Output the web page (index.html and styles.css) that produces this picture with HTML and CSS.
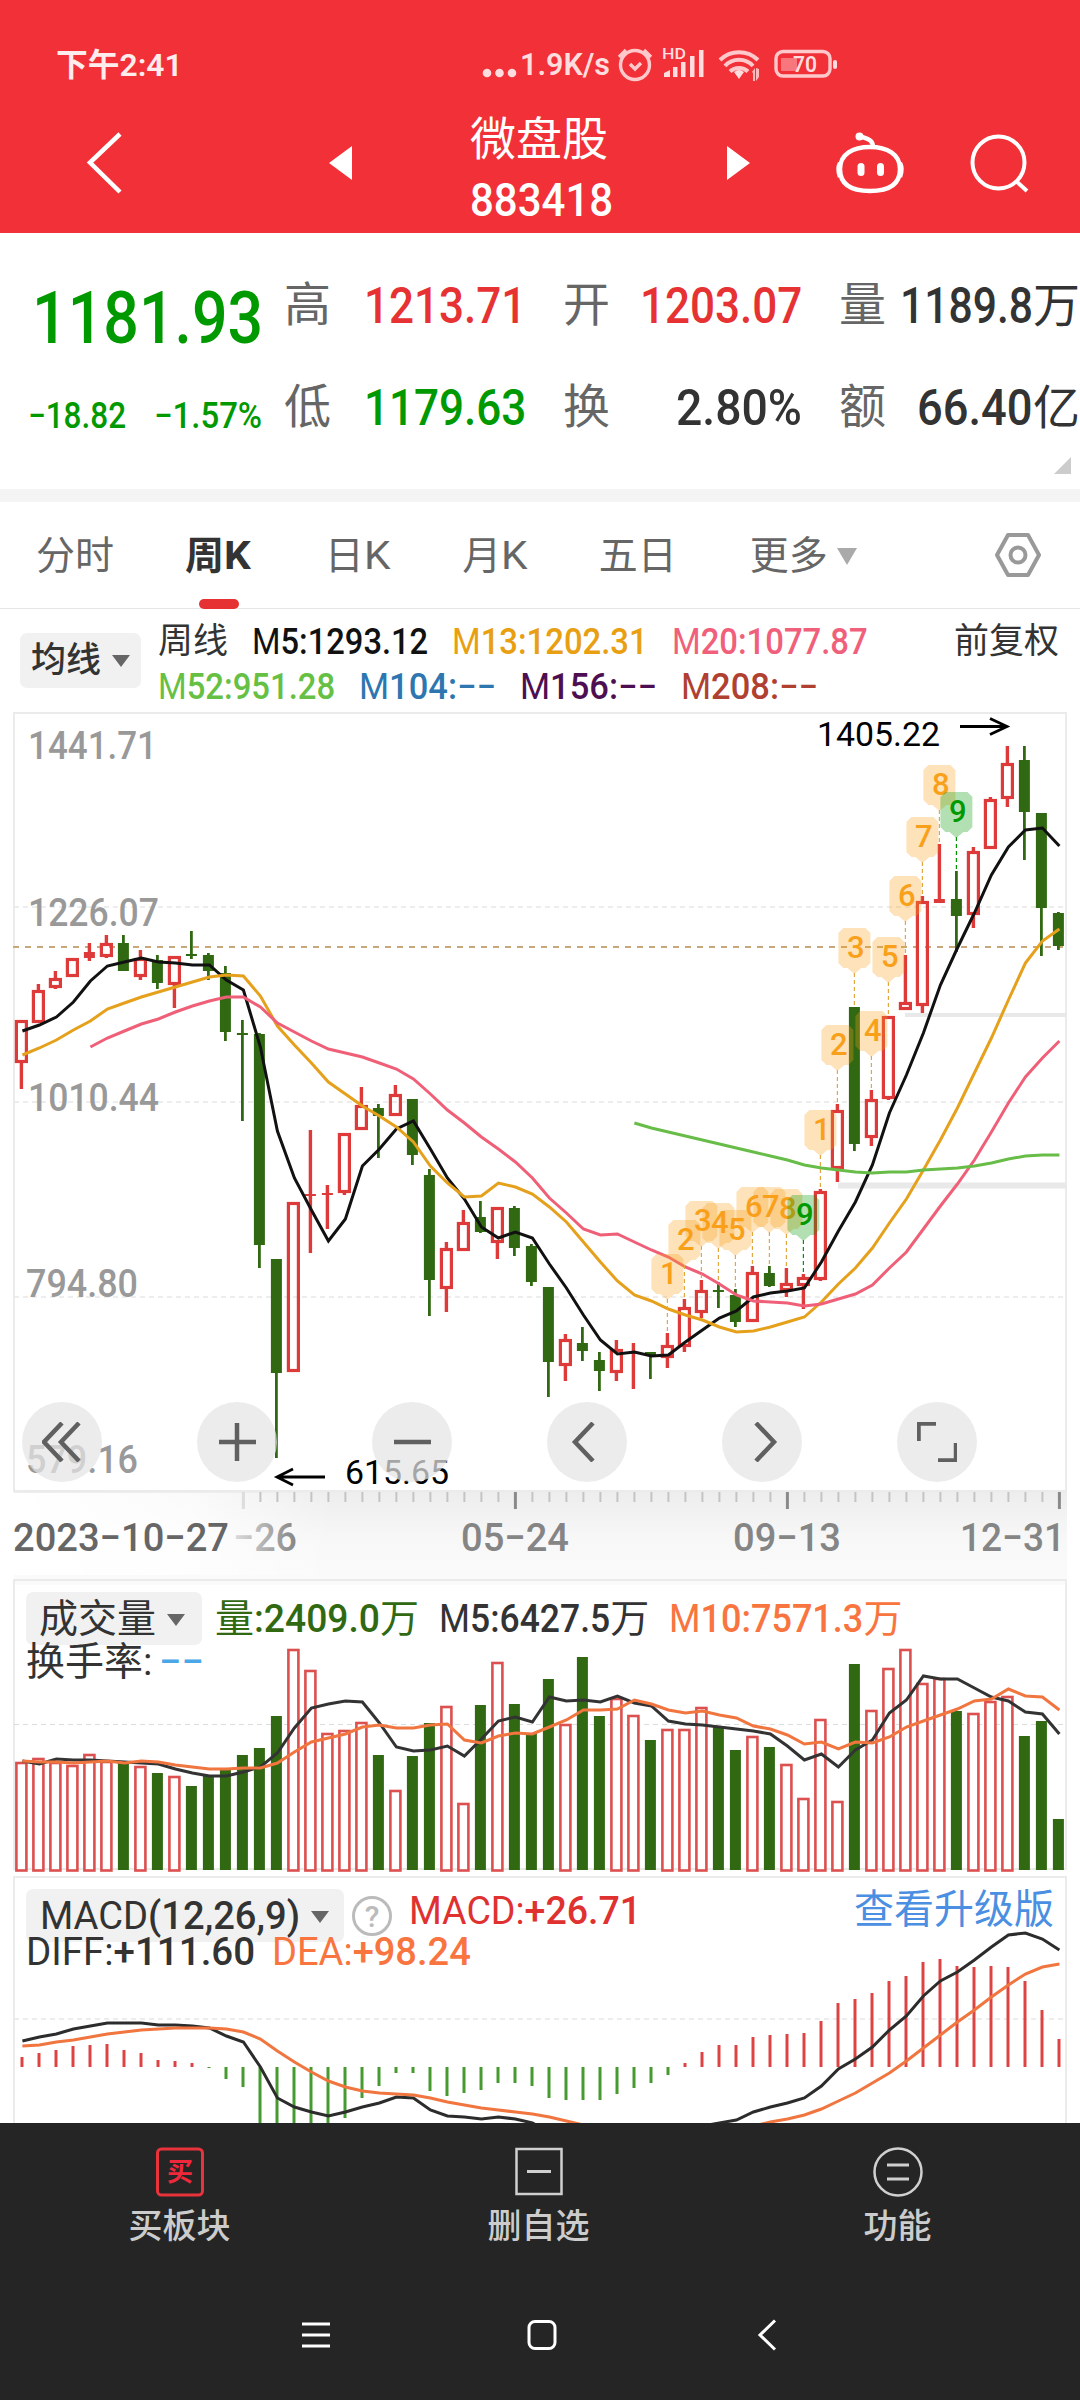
FILE: index.html
```html
<!DOCTYPE html>
<html lang="zh-CN">
	<head>
		<meta charset="utf-8">
		<title>微盘股 883418</title>
		<link rel="stylesheet" href="styles.css">
	</head>
	<body>
		<div class="top">
			<div class="statusBar">
				<span class="fit" data-w="127">下午2:41</span>
				<svg class="statusIcons" width="360" height="44" viewBox="480 43 360 44">
					<g fill="#ffdcdd">
						<circle cx="487" cy="73" r="4.3"/><circle cx="499.500" cy="73" r="4.300"/><circle cx="512" cy="73" r="4.3"/>
						<text x="520" y="75" class="netTxt" textLength="90" lengthAdjust="spacingAndGlyphs">1.9K/s</text>
						<text x="662" y="59" class="hdTxt" textLength="24" lengthAdjust="spacingAndGlyphs">HD</text>
						<path d="M664 77v-4l6-3v7zM673 77v-10h4.500v10zM681 77v-15h4.500v15zM690 77v-21h4.500v21zM699 77v-27h4.500v27z"/>
						<path d="M739 79l-5-7a8 8 0 0 1 10 0z"/>
						<path d="M752 72l3-4v13h-2v-8zM759 69v8l-3 4v-13z" opacity=".8"/>
						<rect x="781" y="58" width="16" height="13" fill="#f7777c"/>
						<rect x="833" y="60" width="4" height="9" rx="2"/>
						<text x="793" y="71.500" class="batTxt" textLength="24" lengthAdjust="spacingAndGlyphs">70</text>
					</g>
					<g fill="none" stroke="#ffc9cb" stroke-width="3.4">
						<circle cx="635" cy="65" r="14.500"/>
						<path d="M630 64l5 5 6-6M619 57l7-7M644 50l7 7"/>
						<path d="M720 60a27 27 0 0 1 38 0M725 66a19 19 0 0 1 28 0M730 71.500a13 13 0 0 1 18 0" stroke-width="4"/>
						<rect x="776" y="51.500" width="54" height="24.500" rx="7"/>
					</g>
				</svg>
			</div>
			<div class="titleBar">
				<svg class="icoBack" width="44" height="70" viewBox="82 127 44 70"><path d="M120 133L90 161.500L120 191" fill="none" stroke="#fff" stroke-width="4.500"/></svg>
				<svg class="icoPrev" width="24" height="36" viewBox="329 145 24 36"><path d="M329 163L352 146V180z" fill="#fff"/></svg>
				<div class="title">
					<div class="name">微盘股</div>
					<div class="code"><span class="fit" data-w="143">883418</span></div>
				</div>
				<svg class="icoNext" width="24" height="36" viewBox="726 145 24 36"><path d="M727 146L750 163L727 180z" fill="#fff"/></svg>
				<svg class="icoBot" width="72" height="66" viewBox="834 130 72 66">
					<g fill="none" stroke="#fff" stroke-width="4.500">
						<path d="M870 147C887 147 900 154 900 169S890 191 870 191S840 184 840 169S853 147 870 147z"/>
						<path d="M873 147C873 140 868 139 862 137"/>
						<path d="M840 163q-3 6 0 14M900 163q3 6 0 14"/>
					</g>
					<circle cx="859.500" cy="136.500" r="4" fill="#fff"/>
					<rect x="857.500" y="163" width="7" height="13" rx="3.500" fill="#fff"/>
					<rect x="877" y="163" width="7" height="13" rx="3.500" fill="#fff"/>
				</svg>
				<svg class="icoFind" width="64" height="64" viewBox="966 131 64 64"><g fill="none" stroke="#fff" stroke-width="4"><circle cx="998.500" cy="162.500" r="26"/><path d="M1016 181L1027 191"/></g></svg>
			</div>
		</div>

		<div class="quote">
			<div class="nowPrice"><span class="fit" data-w="231">1181.93</span></div>
			<div class="label">高</div><div class="val red"><span class="fit" data-w="162">1213.71</span></div>
			<div class="label">开</div><div class="val red"><span class="fit" data-w="162">1203.07</span></div>
			<div class="label">量</div><div class="val"><span class="fit" data-w="133">1189.8</span><span class="unit">万</span></div>
			<div class="diff"><span class="fit" data-w="98">−18.82</span><span class="fit" data-w="108">−1.57%</span></div>
			<div class="label">低</div><div class="val green"><span class="fit" data-w="162">1179.63</span></div>
			<div class="label">换</div><div class="val"><span class="fit" data-w="126">2.80%</span></div>
			<div class="label">额</div><div class="val"><span class="fit" data-w="116">66.40</span><span class="unit">亿</span></div>
			<svg class="corner" width="17" height="17" viewBox="0 0 17 17"><path d="M17 0V17H0z" fill="#ccc"/></svg>
		</div>

		<div class="tabs">
			<span>分时</span>
			<span class="on">周<span class="fit" data-w="27">K</span></span>
			<span>日<span class="fit" data-w="26">K</span></span>
			<span>月<span class="fit" data-w="26">K</span></span>
			<span>五日</span>
			<span>更多<i class="arr"></i></span>
			<svg class="icoSet" width="48" height="46" viewBox="0 0 48 46"><g fill="none" stroke="#999" stroke-width="4"><path d="M14 3H34L45 23L34 43H14L3 23z" stroke-linejoin="round"/><circle cx="24" cy="23" r="7.500"/></g></svg>
		</div>

		<div class="legend">
			<div class="drop maDrop">均线<i class="arr"></i></div>
			<div class="maList">
				<div class="maRow">
					<span class="cjk">周线</span>
					<span class="fit c5" data-w="176">M<b>5:1293.12</b></span>
					<span class="fit c13" data-w="196">M<b>13:1202.31</b></span>
					<span class="fit c20" data-w="196">M<b>20:1077.87</b></span>
					<span class="cjk fq">前复权</span>
				</div>
				<div class="maRow">
					<span class="fit c52" data-w="177">M<b>52:951.28</b></span>
					<span class="fit c104" data-w="137">M<b>104:−−</b></span>
					<span class="fit c156" data-w="137">M<b>156:−−</b></span>
					<span class="fit c208" data-w="137">M<b>208:−−</b></span>
				</div>
			</div>
		</div>

		<div class="kline">
			<svg id="kline" width="1080" height="866" viewBox="0 709 1080 866"></svg>
			<div class="tools">
				<div class="tool"><svg width="40" height="40" viewBox="0 0 40 40"><path d="M20 1L2 20L20 39M37 1L19 20L37 39"/></svg></div>
				<div class="tool"><svg width="40" height="40" viewBox="0 0 40 40"><path d="M20 1V39M2 20H39"/></svg></div>
				<div class="tool"><svg width="40" height="40" viewBox="0 0 40 40"><path d="M2 20H39"/></svg></div>
				<div class="tool"><svg width="40" height="40" viewBox="0 0 40 40"><path d="M26 1L8 20L26 39"/></svg></div>
				<div class="tool"><svg width="40" height="40" viewBox="0 0 40 40"><path d="M14 1L32 20L14 39"/></svg></div>
				<div class="tool"><svg width="40" height="40" viewBox="0 0 40 40"><path d="M1.500 19V1.500H19M39 21V38.500H21"/></svg></div>
			</div>
		</div>

		<div class="pane">
			<svg id="vol" width="1080" height="300" viewBox="0 1575 1080 300"></svg>
			<div class="paneHead volHead">
				<div class="drop">成交量<i class="arr"></i></div>
				<span class="cGreen"><span class="cjk">量</span><span class="fit" data-w="126"><b>:2409.0</b></span><span class="cjk">万</span></span>
				<span class="cDark"><span class="fit" data-w="171">M<b>5:6427.5</b></span><span class="cjk">万</span></span>
				<span class="cOrange"><span class="fit" data-w="194">M<b>10:7571.3</b></span><span class="cjk">万</span></span>
			</div>
			<div class="paneSub volSub"><span class="cjk">换手率:</span><span class="fit cBlue" data-w="45"><b>−−</b></span></div>
		</div>

		<div class="pane macdPane">
			<svg id="macd" width="1080" height="248" viewBox="0 1875 1080 248"></svg>
			<div class="paneHead macdHead">
				<div class="drop"><span class="fit" data-w="260">MACD<b>(12,26,9)</b></span><i class="arr"></i></div>
				<div class="help">?</div>
				<span class="fit cRed" data-w="232">MACD:<b>+26.71</b></span>
				<span class="cjk upgrade">查看升级版</span>
			</div>
			<div class="paneSub macdSub"><span class="fit cDark" data-w="229">DIFF:<b>+111.60</b></span><span class="fit cOrange" data-w="199">DEA:<b>+98.24</b></span></div>
		</div>

		<div class="footer">
			<div class="menus">
				<div class="menu"><svg width="50" height="50" viewBox="0 0 50 50"><rect x="2.500" y="2" width="45" height="46" rx="4" fill="none" stroke="#e8323c" stroke-width="3"/><text x="25" y="34" text-anchor="middle" class="buyTxt">买</text></svg>买板块</div>
				<div class="menu"><svg width="50" height="50" viewBox="0 0 50 50"><g fill="none" stroke="#d0d0d0" stroke-width="2.500"><rect x="2.500" y="2" width="45" height="45"/><path d="M13 24.500H37" stroke-width="3"/></g></svg>删自选</div>
				<div class="menu"><svg width="50" height="50" viewBox="0 0 50 50"><g fill="none" stroke="#d0d0d0" stroke-width="2.500"><circle cx="25" cy="25" r="23.500"/><path d="M14 18H36M14 32H36" stroke-width="3"/></g></svg>功能</div>
			</div>
			<div class="sysNav">
				<svg width="30" height="32" viewBox="0 0 30 32"><path d="M1 5H29M1 16H29M1 27H29"/></svg>
				<svg width="30" height="32" viewBox="0 0 30 32"><rect x="2" y="2.500" width="26" height="27" rx="6"/></svg>
				<svg width="30" height="32" viewBox="0 0 30 32"><path d="M23 1.500L8 16L23 30.500"/></svg>
			</div>
		</div>
		<script src="chart.js"></script>
	</body>
</html>
```

FILE: styles.css
```css
body {
	margin: 0px;
	width: 1080px;
	height: 2400px;
	overflow: hidden;
	background-color: #fff;
	color: #333;
	font-family: Roboto, "Noto Sans CJK SC", sans-serif;
}
svg {
	display: block;
}
b {
	font-weight: 500;
}
.fit {
	display: inline-block;
	white-space: nowrap;
	transform-origin: 0 50%;
}

/* header */
.top {
	height: 233px;
	background-color: #f13038;
	color: #fff;
}
.statusBar {
	display: flex;
	height: 86px;
	padding: 43px 0 0 56px;
	box-sizing: border-box;
	font-size: 32px;
	font-weight: 600;
	line-height: 44px;
	color: #ffecec;
}
.statusIcons {
	margin-left: 297px;
}
.netTxt {
	font-size: 31px;
	font-weight: 600;
}
.hdTxt {
	font-size: 15px;
	font-weight: 500;
}
.batTxt {
	font-size: 22px;
	font-weight: 600;
}
.titleBar {
	display: flex;
	align-items: center;
	height: 146px;
	padding: 0 50px 0 82px;
}
.titleBar svg {
	margin-top: 8px;
}
.icoPrev {
	margin-left: 203px;
}
.title {
	width: 143px;
	margin-left: 117px;
	padding-top: 20px;
}
.name {
	font-size: 46px;
	line-height: 62px;
	white-space: nowrap;
}
.code {
	font-size: 47px;
	font-weight: 500;
	line-height: 60px;
}
.icoNext {
	margin-left: 113px;
}
.icoBot {
	margin-left: 84px;
}
.icoFind {
	margin-left: 60px;
}

/* quote */
.quote {
	position: relative;
	display: grid;
	grid-template-columns: 284px 48px 231px 46px 230px 47px 194px;
	grid-template-rows: 102px 102px;
	padding-top: 21px;
	height: 235px;
	align-items: center;
	font-size: 50px;
	font-weight: 500;
	line-height: 102px;
	border-bottom: 13px solid #f4f4f4;
	white-space: nowrap;
}
.nowPrice {
	padding-left: 32px;
	font-size: 73px;
	color: #009900;
	padding-top: 25px;
}
.diff {
	display: flex;
	gap: 28px;
	padding-left: 28px;
	padding-top: 18px;
	font-size: 36px;
	font-weight: 500;
	color: #009900;
}
.label {
	font-size: 47px;
	font-weight: 400;
	color: #666;
}
.val {
	display: flex;
	justify-content: flex-end;
	padding-right: 37px;
	padding-top: 1px;
}
.val:has(.unit) {
	padding-right: 0;
}
.unit {
	font-size: 47px;
	font-weight: 400;
}
.red {
	color: #e63232;
}
.green {
	color: #009900;
}
.corner {
	position: absolute;
	right: 9px;
	bottom: 15px;
}

/* tabs */
.tabs {
	display: flex;
	align-items: center;
	height: 106px;
	padding-left: 36px;
	border-bottom: 1px solid #e6e6e6;
	font-size: 39px;
	font-weight: 400;
	color: #666;
	white-space: nowrap;
	box-sizing: content-box;
}
.tabs > span {
	position: relative;
	line-height: 106px;
	padding-top: 1px;
}
.tabs > span:nth-child(2) { margin-left: 71px; }
.tabs > span:nth-child(3) { margin-left: 74px; }
.tabs > span:nth-child(4) { margin-left: 72px; }
.tabs > span:nth-child(5) { margin-left: 71px; }
.tabs > span:nth-child(6) { margin-left: 73px; }
.on {
	color: #333;
	font-weight: 700;
}
.on::after {
	content: "";
	position: absolute;
	left: 14px;
	bottom: 0;
	width: 40px;
	height: 10px;
	border-radius: 5px;
	background-color: #e63232;
}
.arr {
	display: inline-block;
	border: 9px solid transparent;
	border-top: 12px solid #666;
	border-bottom: 0;
	vertical-align: middle;
}
.tabs .arr {
	margin: -4px 0 0 9px;
	border-width: 17px 10px 0;
	border-top-color: #aaa;
}
.icoSet {
	margin-left: 137px;
}

/* ma legend */
.legend {
	display: flex;
	height: 100px;
	padding-left: 20px;
	font-size: 36px;
}
.drop {
	background-color: #f1f1f1;
	border-radius: 7px;
	white-space: nowrap;
}
.maDrop {
	width: 121px;
	height: 55px;
	margin-top: 24px;
	padding-left: 11px;
	box-sizing: border-box;
	line-height: 55px;
	font-size: 35px;
	font-weight: 500;
}
.drop .arr {
	margin: -3px 0 0 11px;
}
.maList {
	margin-left: 17px;
	padding-top: 11px;
	width: 906px;
}
.maRow {
	display: flex;
	gap: 24px;
	height: 45px;
	line-height: 45px;
}
.maRow .cjk {
	font-size: 35px;
	line-height: 43px;
}
.fq {
	margin-left: auto;
	margin-right: 5px;
}
.c5 { color: #111; }
.c13 { color: #e8a012; }
.c20 { color: #f0607a; }
.c52 { color: #66c044; }
.c104 { color: #2e76b0; }
.c156 { color: #4d0f52; }
.c208 { color: #b04030; }

/* charts */
.kline, .pane {
	position: relative;
}
.axisTxt {
	font-size: 39.500px;
	font-weight: 500;
	fill: #999;
}
.dateTxt {
	font-size: 39.500px;
	font-weight: 500;
	fill: #858585;
}
.peakTxt {
	font-size: 33px;
	fill: #000;
}
.tagTxt {
	font-size: 31px;
	font-weight: 500;
	text-anchor: middle;
}
.tools {
	position: absolute;
	left: 22px;
	top: 693px;
	display: flex;
	gap: 95px;
}
.tool {
	display: flex;
	align-items: center;
	justify-content: center;
	width: 80px;
	height: 80px;
	border-radius: 50%;
	background-color: rgba(228,228,228,.72);
}
.tool path {
	fill: none;
	stroke: #606060;
	stroke-width: 4.500;
}
.paneHead, .paneSub {
	position: absolute;
	left: 26px;
	display: flex;
	font-size: 39px;
	line-height: 53px;
	white-space: nowrap;
}
.paneHead .drop {
	padding-left: 14px;
	box-sizing: border-box;
	height: 53px;
}
.volHead {
	top: 17px;
	gap: 20px;
	line-height: 55px;
}
.volHead .drop {
	width: 176px;
	margin-right: -7px;
	padding-left: 13px;
}
.paneSub {
	line-height: 40px;
}
.volSub {
	top: 67px;
}
.volSub .fit {
	margin-left: 7px;
}
.macdPane {
	height: 248px;
}
.macdHead {
	top: 14px;
	right: 26px;
}
.macdHead .drop {
	width: 318px;
	padding-top: 1px;
}
.macdHead .cRed {
	margin-left: 17px;
	line-height: 45px;
}
.help {
	width: 34px;
	height: 34px;
	margin: 7px 0 0 8px;
	border: 3px solid #bbb;
	border-radius: 50%;
	color: #bbb;
	font-size: 30px;
	font-weight: 500;
	line-height: 35px;
	text-align: center;
}
.upgrade {
	margin-left: auto;
	font-size: 40px;
	line-height: 41px;
	color: #4a8fe2;
}
.macdSub {
	top: 57px;
	gap: 17px;
}
.cGreen { color: #316912; }
.cDark { color: #333; }
.cOrange { color: #f9753f; }
.cBlue { color: #4aa8e8; }
.cRed { color: #e03131; }

/* footer */
.footer {
	height: 277px;
	background-color: #252525;
}
.menus {
	display: flex;
}
.menu {
	display: flex;
	flex-direction: column;
	align-items: center;
	width: 359px;
	padding-top: 24px;
	font-size: 34px;
	font-weight: 500;
	line-height: 59px;
	color: #ccc;
}
.buyTxt {
	font-size: 26px;
	font-weight: 700;
	fill: #f0283c;
}
.sysNav {
	display: flex;
	justify-content: space-between;
	padding: 63px 298px 0 301px;
}
.sysNav path, .sysNav rect {
	fill: none;
	stroke: #fff;
	stroke-width: 3;
}
```

FILE: chart.js
```js
// condensed numerals: squeeze each text to its column width
function fitText()
{
	var list = document.querySelectorAll(".fit");
	for(var i=0; i < list.length; i++)
	{
		var w = Number(list[i].getAttribute("data-w"));
		var real = list[i].offsetWidth;
		list[i].style.transform = "scaleX(" + (w / real) + ")";
		list[i].style.marginRight = (w - real) + "px";
	}
}

var RED = "#de3a3a";
var GREEN = "#316912";
var STEP = 17;
var X0 = 21.4;

// r = up, g = down : high, body top, body bottom, low
var CANDLES = [
	["r",1020,1020,1063,1089],["r",984,990,1023,1023],["r",971,978,988,989],["r",958,958,977,977],
	["r",943,952,958,961],["r",935,943,957,958],["g",935,943,971,971],["r",950,958,977,980],
	["g",955,960,983,989],["r",956,956,985,1008],["g",931,954,956,959],["g",953,955,971,980],
	["g",966,973,1032,1041],["g",1020,1033,1035,1121],["g",1033,1034,1245,1268],["g",1259,1259,1373,1458],
	["r",1202,1202,1372,1372],["r",1130,1194,1196,1253],["r",1185,1193,1195,1229],["r",1133,1133,1193,1195],
	["r",1087,1105,1130,1130],["g",1104,1108,1116,1158],["r",1085,1094,1116,1116],["g",1099,1099,1155,1165],
	["g",1169,1175,1280,1316],["r",1242,1248,1289,1312],["r",1210,1222,1251,1251],["g",1201,1217,1232,1233],
	["r",1207,1207,1243,1259],["g",1206,1208,1248,1256],["g",1244,1246,1282,1286],["g",1287,1287,1362,1397],
	["r",1334,1339,1366,1381],["g",1327,1343,1351,1361],["g",1352,1360,1371,1391],["r",1340,1349,1373,1381],
	["r",1343,1352,1354,1389],["g",1352,1352,1356,1379],["r",1333,1345,1358,1368],["r",1299,1307,1347,1352],
	["r",1280,1290,1313,1318],["g",1282,1290,1292,1308],["g",1289,1295,1322,1327],["r",1266,1272,1322,1322],
	["g",1266,1273,1286,1287],["r",1268,1283,1291,1297],["r",1274,1277,1286,1309],["r",1189,1191,1280,1281],
	["r",1104,1110,1169,1182],["g",1007,1007,1144,1151],["r",1090,1099,1138,1146],["r",1016,1016,1099,1100],
	["r",955,1002,1010,1010],["r",896,901,1006,1013],["r",844,899,903,903],["g",871,899,916,952],
	["r",847,851,915,928],["r",797,799,849,849],["r",746,763,799,807],["g",746,760,812,860],
	["g",813,813,908,956],["g",912,913,946,950]
];
var M5 = [1031,1025,1017,1002,981,966,962,958,962,963,965,965,980,990,1047,1131,1178,1210,1241,1219,1166,1149,1129,1121,1149,1178,1199,1227,1238,1232,1238,1264,1288,1315,1340,1354,1352,1356,1355,1342,1330,1318,1311,1297,1293,1291,1288,1262,1231,1202,1165,1113,1075,1033,985,948,913,875,847,830,828,846];
var M13 = [1055,1048,1040,1030,1021,1009,1003,997,992,987,982,977,975,976,996,1026,1045,1063,1082,1094,1106,1116,1127,1142,1166,1183,1197,1196,1183,1187,1194,1207,1222,1242,1262,1281,1295,1301,1309,1315,1320,1327,1332,1331,1327,1322,1317,1302,1284,1268,1248,1223,1199,1170,1140,1108,1073,1038,1000,963,941,929];
var M20 = [1047,1038,1031,1024,1019,1012,1006,1001,997,997,1007,1023,1032,1041,1049,1053,1057,1063,1069,1079,1094,1110,1123,1137,1149,1162,1178,1198,1213,1229,1235,1234,1242,1250,1257,1267,1274,1284,1295,1301,1302,1303,1306,1304,1299,1294,1285,1268,1252,1229,1206,1184,1160,1132,1103,1077,1058,1041];
var M52 = [1123,1128,1132,1136,1140,1144,1148,1152,1156,1160,1165,1168,1170,1172,1173,1172,1172,1170,1169,1168,1166,1163,1159,1156,1155,1155];

var VOL = [1762,1758,1762,1765,1754,1761,1763,1766,1773,1776,1786,1776,1770,1755,1748,1716,1649,1670,1733,1730,1722,1755,1790,1756,1723,1706,1803,1705,1662,1704,1733,1679,1724,1657,1716,1698,1715,1740,1729,1729,1707,1727,1750,1736,1747,1764,1798,1719,1801,1664,1710,1668,1649,1683,1678,1711,1713,1701,1696,1736,1721,1819];
var VM5 = [1761,1764,1759,1760,1760,1761,1762,1763,1764,1769,1773,1776,1776,1772,1767,1753,1728,1708,1704,1701,1702,1723,1747,1751,1750,1746,1756,1739,1721,1717,1722,1697,1701,1700,1702,1696,1703,1706,1721,1724,1725,1727,1729,1731,1734,1746,1760,1754,1767,1750,1740,1713,1700,1676,1679,1679,1688,1697,1701,1712,1714,1734];
var VM10 = [1761,1762,1762,1763,1762,1761,1763,1761,1762,1765,1767,1769,1769,1768,1768,1763,1752,1742,1738,1734,1727,1725,1728,1728,1725,1724,1740,1743,1736,1733,1734,1727,1720,1710,1710,1709,1700,1704,1710,1713,1711,1715,1718,1726,1729,1735,1744,1742,1749,1742,1743,1737,1727,1721,1715,1709,1701,1699,1689,1696,1697,1710];

var MACD = [10,14,17,21,22,23,17,14,7,6,4,-1,-12,-20,-62,-70,-75,-72,-60,-51,-31,-19,-6,-6,-24,-29,-26,-23,-16,-16,-19,-31,-33,-33,-33,-27,-21,-16,-8,4,15,22,22,30,32,33,34,46,64,68,74,86,91,105,108,101,100,101,100,86,57,28];
var DIFF = [2041,2037,2034,2029,2026,2023,2023,2023,2025,2025,2026,2028,2036,2042,2067,2098,2107,2112,2116,2112,2107,2103,2097,2098,2110,2116,2117,2119,2117,2119,2123,2132,2136,2138,2140,2140,2138,2136,2133,2129,2126,2123,2120,2112,2107,2103,2098,2086,2069,2059,2047,2030,2016,1996,1981,1972,1960,1947,1935,1933,1939,1950];
var DEA = [2046,2045,2042,2040,2037,2034,2032,2030,2029,2028,2028,2028,2029,2032,2039,2051,2062,2072,2081,2087,2091,2093,2094,2095,2098,2102,2105,2108,2110,2112,2114,2117,2121,2125,2128,2130,2132,2133,2134,2134,2133,2131,2129,2126,2122,2119,2115,2109,2101,2093,2083,2073,2061,2048,2035,2022,2010,1997,1985,1974,1967,1964];

function xOf(i)
{
	return X0 + STEP * i;
}

function rect(x, y, w, h, attr)
{
	return '<rect x="' + x + '" y="' + y + '" width="' + w + '" height="' + h + '" ' + attr + '/>';
}

function line(x1, y1, x2, y2, color, w, dash)
{
	return '<path d="M' + x1 + ' ' + y1 + 'L' + x2 + ' ' + y2 + '" stroke="' + color + '" stroke-width="' + w + '"' + (dash ? ' stroke-dasharray="' + dash + '"' : '') + '/>';
}

function curve(arr, start, color)
{
	var pts = "";
	for(var i=0; i < arr.length; i++)
	{
		pts += (xOf(i + start) + 1) + "," + arr[i] + " ";
	}
	return '<polyline points="' + pts + '" fill="none" stroke="' + color + '" stroke-width="3"/>';
}

function text(x, y, w, cls, txt, attr)
{
	return '<text x="' + x + '" y="' + y + '" class="' + cls + '" textLength="' + w + '" lengthAdjust="spacingAndGlyphs" ' + (attr || '') + '>' + txt + '</text>';
}

function tag(i, no)
{
	var color = no == 9 ? "#009900" : "#f9a01b";
	var x = xOf(i);
	var top = CANDLES[i][1] - 79;
	var s = '<path d="M' + (x - 11) + ' ' + top + 'h22l5 5v30l-5 5h-4l-7 6l-7 -6h-4l-5 -5v-30z" fill="' + color + '" opacity=".3"/>';
	s += line(x, top + 45, x, top + 79, no == 9 ? "#009900" : "#e0a840", 1.2, "4 3");
	s += '<text x="' + (x + 1.5) + '" y="' + (top + 30) + '" class="tagTxt" fill="' + color + '">' + no + '</text>';
	return s;
}

function drawKline()
{
	var s = '<defs><linearGradient id="band" x1="0" y1="0" x2="0" y2="1"><stop offset="0" stop-color="#ededed"/><stop offset=".6" stop-color="#f8f8f8"/><stop offset="1" stop-color="#fafafa"/></linearGradient>';
	s += '<linearGradient id="fade" x1="0" y1="0" x2="1" y2="0"><stop offset="0" stop-color="#fff"/><stop offset=".55" stop-color="#fff" stop-opacity=".75"/><stop offset="1" stop-color="#fff" stop-opacity="0"/></linearGradient>';
	s += '<linearGradient id="dateFade" x1="0" y1="0" x2="1" y2="0"><stop offset="0" stop-color="#ddd"/><stop offset="1" stop-color="#858585"/></linearGradient></defs>';
	s += rect(14, 1491, 1053, 84, 'fill="url(#band)"');
	s += rect(14, 1493, 320, 82, 'fill="url(#fade)"');
	s += rect(14, 713, 1052, 778, 'fill="none" stroke="#ebebeb" stroke-width="2"');
	s += line(14, 907, 1066, 907, "#e8e8e8", 1.5, "5 4");
	s += line(14, 1102, 1066, 1102, "#e8e8e8", 1.5, "5 4");
	s += line(14, 1297, 1066, 1297, "#e8e8e8", 1.5, "5 4");
	s += line(905, 1015, 1067, 1015, "#e9e9e9", 4);
	s += line(838, 1185.5, 1067, 1185.5, "#e9e9e9", 6);
	s += line(13, 947, 1066, 947, "#c8a878", 2, "6 6");

	s += text(28, 759, 129, "axisTxt", "1441.71");
	s += text(28, 926, 131, "axisTxt", "1226.07");
	s += text(28, 1111, 131, "axisTxt", "1010.44");
	s += text(26, 1297, 112, "axisTxt", "794.80");
	s += text(26, 1473, 112, "axisTxt", "579.16");

	for(var i=0; i < CANDLES.length; i++)
	{
		var c = CANDLES[i];
		var x = xOf(i);
		var color = c[0] == "r" ? RED : GREEN;
		if(c[1] < c[2]) s += line(x, c[1], x, c[2], color, c[0] == "r" ? 3.4 : 2.8);
		if(c[4] > c[3]) s += line(x, c[3], x, c[4], color, c[0] == "r" ? 3.4 : 2.8);
		if(c[0] == "r" && c[3] - c[2] > 6)
		{
			s += rect(x - 5, c[2] + 1.5, 10, c[3] - c[2] - 3, 'fill="none" stroke="' + RED + '" stroke-width="3.2"');
		}
		else
		{
			s += rect(x - 5.5, c[2], 11, c[3] - c[2], 'fill="' + color + '"');
		}
	}
	s += curve(M5, 0, "#111");
	s += curve(M13, 0, "#e5a01c");
	s += curve(M20, 4, "#ef6078");
	s += curve(M52, 36, "#68bd48");

	for(var n=1; n <= 9; n++)
	{
		s += tag(37 + n, n);
	}
	for(var n=1; n <= 9; n++)
	{
		s += tag(46 + n, n);
	}

	s += text(817, 746, 123, "peakTxt", "1405.22");
	s += '<path d="M960 726.500H1007M990 718.500L1007 726.500L990 734.500" fill="none" stroke="#000" stroke-width="2.8"/>';
	s += text(345, 1484, 104, "peakTxt", "615.65");
	s += '<path d="M325 1477H277M293 1469L277 1477L293 1485" fill="none" stroke="#000" stroke-width="2.8"/>';

	for(var i=13; i <= 61; i++)
	{
		var major = (i - 13) % 16 == 0;
		s += line(xOf(i) + 1, 1492, xOf(i) + 1, major ? 1509 : 1502, i == 13 ? "#ddd" : (major ? "#8a8a8a" : "#c4c4c4"), major ? 3 : 2);
	}
	s += text(13, 1551, 216, "dateTxt", "2023−10−27", 'style="fill:#666"');
	s += text(233, 1551, 64, "dateTxt", "−26", 'style="fill:url(#dateFade)"');
	s += text(461, 1551, 108, "dateTxt", "05−24");
	s += text(733, 1551, 108, "dateTxt", "09−13");
	s += text(960, 1551, 105, "dateTxt", "12−31");
	document.getElementById("kline").innerHTML = s;
}

function drawVol()
{
	var s = rect(14, 1575, 1053, 10, 'fill="#fafafa"');
	s += rect(14, 1580, 1052, 289, 'fill="none" stroke="#ebebeb" stroke-width="2"');
	s += line(14, 1724.5, 1066, 1724.5, "#dcdcdc", 1, "5 4");
	for(var i=0; i < VOL.length; i++)
	{
		var x = xOf(i);
		if(CANDLES[i][0] == "r")
		{
			s += rect(x - 5, VOL[i] + 1, 10, 1869.5 - VOL[i], 'fill="#fff" stroke="#dc5050" stroke-width="2.6"');
		}
		else
		{
			s += rect(x - 5.5, VOL[i], 11, 1870 - VOL[i], 'fill="' + GREEN + '"');
		}
	}
	s += curve(VM5, 0, "#333");
	s += curve(VM10, 0, "#f0753f");
	document.getElementById("vol").innerHTML = s;
}

function drawMacd()
{
	var s = rect(14, 1877, 1052, 300, 'fill="none" stroke="#ebebeb" stroke-width="2"');
	s += line(14, 2019, 1066, 2019, "#e8e8e8", 1.5, "5 4");
	for(var i=0; i < MACD.length; i++)
	{
		var x = xOf(i) + 0.6;
		s += line(x, 2067, x, 2067 - MACD[i], MACD[i] > 0 ? "#dc4444" : "#469a30", 3);
	}
	s += curve(DIFF, 0, "#2c2c2c");
	s += curve(DEA, 0, "#f0753f");
	document.getElementById("macd").innerHTML = s;
}

drawKline();
drawVol();
drawMacd();
fitText();
```
